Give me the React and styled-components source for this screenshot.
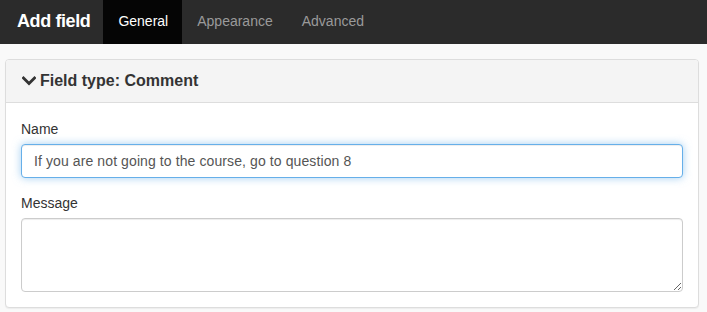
import React from 'react'
import { styled, createGlobalStyle } from 'styled-components'

const GlobalStyle = createGlobalStyle`
  html, body {
    margin: 0;
    padding: 0;
    background: #f9f9f9;
    font-family: "Liberation Sans", Arial, sans-serif;
  }
  * { box-sizing: border-box; }
`;

const TopBar = styled.div`
  display: flex;
  align-items: stretch;
  height: 44px;
  background: #2b2b2b;
  padding-left: 17px;
`;

const Title = styled.h1`
  margin: 0 13px 0 0;
  font-size: 18px;
  font-weight: 700;
  letter-spacing: -0.4px;
  line-height: 42px;
  color: #ffffff;
`;

const Tab = styled.a`
  display: flex;
  align-items: center;
  padding: 0 14px 2px 15px;
  font-size: 14px;
  color: ${p => (p.$active ? '#ffffff' : '#9a9a9a')};
  background: ${p => (p.$active ? '#050505' : 'transparent')};
  cursor: pointer;
`;

const Panel = styled.div`
  margin: 15px 8px 6px 5px;
  background: #ffffff;
  border: 1px solid #dddddd;
  border-radius: 4px;
  box-shadow: 0 1px 1px rgba(0, 0, 0, 0.05);
`;

const PanelHeading = styled.div`
  display: flex;
  align-items: center;
  gap: 4px;
  height: 43px;
  padding: 0 16px;
  background: #f4f4f4;
  border-bottom: 1px solid #dddddd;
  border-radius: 3px 3px 0 0;
  font-size: 16px;
  font-weight: 700;
  color: #333333;
`;

const PanelBody = styled.div`
  padding: 16px 15px 15px;
`;

const FormGroup = styled.div`
  margin-bottom: ${p => (p.$last ? '0' : '15px')};
`;

const Label = styled.label`
  display: block;
  margin-bottom: 5px;
  font-size: 14px;
  line-height: 20px;
  color: #333333;
`;

const Input = styled.input`
  display: block;
  width: 100%;
  height: 34px;
  padding: 6px 12px;
  font-family: inherit;
  font-size: 14px;
  letter-spacing: 0.1px;
  color: #555555;
  background: #ffffff;
  border: 1px solid #66afe9;
  border-radius: 4px;
  outline: none;
  box-shadow: inset 0 1px 1px rgba(0, 0, 0, 0.075), 0 0 8px rgba(102, 175, 233, 0.6);
`;

const TextArea = styled.textarea`
  display: block;
  width: 100%;
  height: 74px;
  padding: 6px 12px;
  font-family: inherit;
  font-size: 14px;
  color: #555555;
  background: #ffffff;
  border: 1px solid #cccccc;
  border-radius: 4px;
  box-shadow: inset 0 1px 1px rgba(0, 0, 0, 0.075);
  outline: none;
`;

const Chevron = () => (
  <svg width="14" height="14" viewBox="0 0 14 14">
    <path d="M1.5 4 L7 9.5 L12.5 4" fill="none" stroke="#333" strokeWidth="2.8" strokeLinecap="square" />
  </svg>
)

export default function App() {
  return (
    <>
      <GlobalStyle />
      <TopBar>
        <Title>Add field</Title>
        <Tab $active>General</Tab>
        <Tab>Appearance</Tab>
        <Tab>Advanced</Tab>
      </TopBar>

      <Panel>
        <PanelHeading>
          <Chevron />
          Field type: Comment
        </PanelHeading>
        <PanelBody>
          <FormGroup>
            <Label>Name</Label>
            <Input defaultValue="If you are not going to the course, go to question 8" />
          </FormGroup>
          <FormGroup $last>
            <Label>Message</Label>
            <TextArea />
          </FormGroup>
        </PanelBody>
      </Panel>
    </>
  )
}
